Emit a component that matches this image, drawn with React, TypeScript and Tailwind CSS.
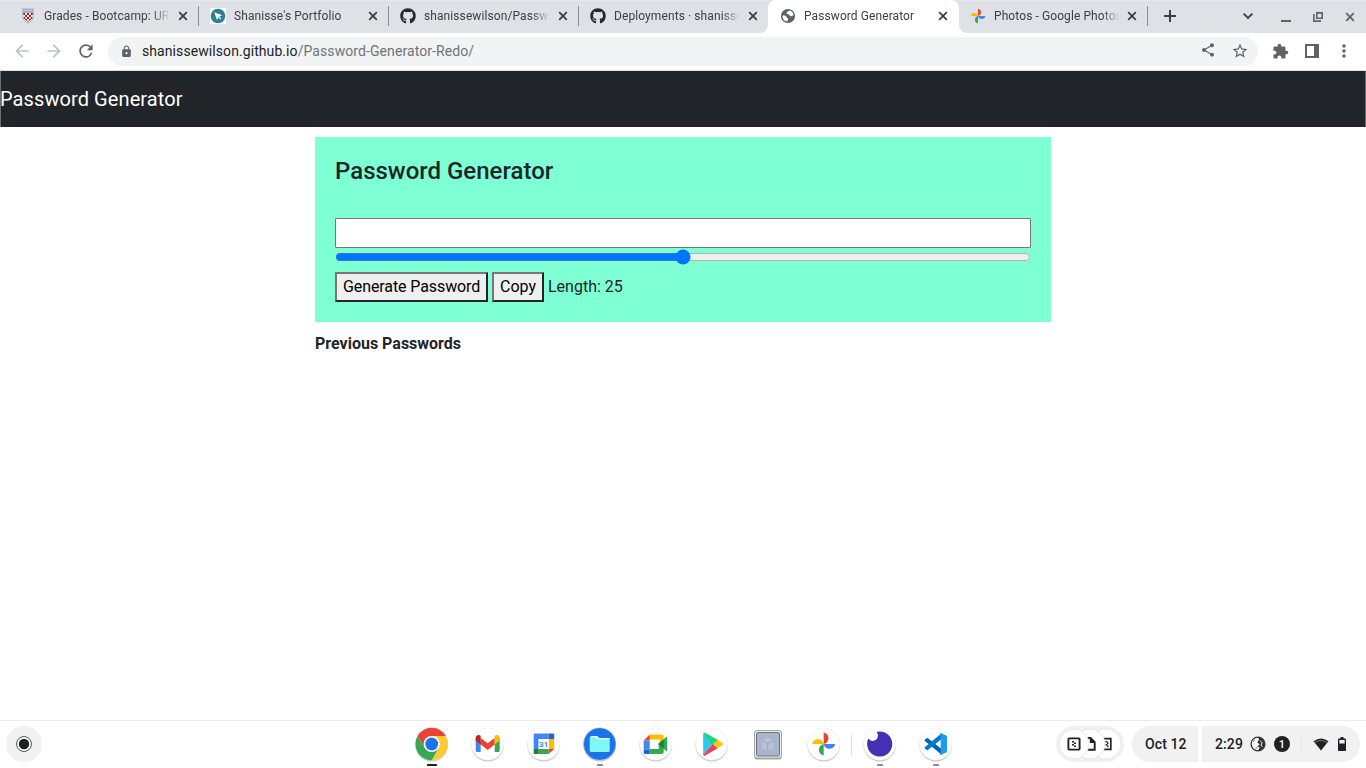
import type { ReactNode } from "react";
import { useState } from "react";
import { MdArrowBack, MdArrowForward, MdRefresh, MdLock, MdShare, MdStarBorder, MdExtension, MdMoreVert } from "react-icons/md";
import { FaGithub } from "react-icons/fa";

function CrossIcon({ className = "" }: { className?: string }) {
  return (
    <svg width="10" height="10" viewBox="0 0 10 10" className={"shrink-0 " + className}>
      <path d="M1.2 1.2 8.8 8.8M8.8 1.2 1.2 8.8" stroke="currentColor" strokeWidth="1.8" />
    </svg>
  );
}

function Pinwheel({ size }: { size: number }) {
  return (
    <svg width={size} height={size} viewBox="0 0 24 24">
      <path d="M12 1a5.6 5.6 0 0 1 0 11z" fill="#ea4335" />
      <path d="M23 12a5.6 5.6 0 0 1-11 0z" fill="#4285f4" />
      <path d="M12 23a5.6 5.6 0 0 1 0-11z" fill="#34a853" />
      <path d="M1 12a5.6 5.6 0 0 1 11 0z" fill="#fbbc04" />
    </svg>
  );
}

function ShieldFavicon() {
  return (
    <svg width="16" height="16" viewBox="0 0 16 16">
      <rect x="2" y="0.5" width="12" height="4" fill="#a9abd0" />
      <path d="M2 2.4h12" stroke="#d5d6ea" strokeWidth=".8" strokeDasharray="1.5 .7" />
      <path d="M2.6 4.5h10.8v4.6Q13 13 8 15.3 3 13 2.6 9.1z" fill="#fff" stroke="#aaa9c6" strokeWidth=".9" />
      <g fill="#b01824">
        <path d="M3.2 5h2v2h-2zM7 5h2v2H7zM10.8 5h2v2h-2zM5.1 7h2v2h-2zM8.9 7h2v2h-2zM3.3 9h1.9v2H4zM7 9h2v2H7zM10.8 9h1.9l-.7 2h-1.2zM5.1 11h2v2l-2-1zM8.9 11h2v1l-2 1zM7 13h2l-1 1.2z" />
      </g>
    </svg>
  );
}

function ArrowFavicon() {
  return (
    <svg width="16" height="16" viewBox="0 0 16 16">
      <rect width="16" height="16" fill="#fff" />
      <circle cx="8" cy="8" r="7.3" fill="#2a7f95" />
      <path d="M4.2 4.300 12.300 7.300 9.300 8.500 11.300 10.800 10.400 11.600 8.400 9.300 7 11.900z" fill="#fff" />
    </svg>
  );
}

function GlobeFavicon() {
  return (
    <svg width="16" height="16" viewBox="0 0 16 16">
      <circle cx="8" cy="8" r="7.1" fill="#5f6368" />
      <path d="M9.200 2.500C8.800 3.800 6.700 3.400 6.600 4.900 6.500 6.200 7.700 6 8.600 6.300 9.900 6.700 9.300 8.200 10.700 8.300 11.800 8.400 12.300 7.500 13.600 7.600 13.700 4.800 11.800 2.900 9.200 2.500zM2.400 7.600C4 7.500 6.300 7.600 6.500 9.100 6.700 10.200 8 9.800 8.100 10.900 8.200 12 7.200 12.100 7.400 13.500 4.600 13.500 2.300 11 2.400 7.600z" fill="#fff" />
    </svg>
  );
}

type TabData = { title: string; icon: ReactNode };

const tabs: TabData[] = [
  { title: "Grades - Bootcamp: UR-V", icon: <ShieldFavicon /> },
  { title: "Shanisse's Portfolio", icon: <ArrowFavicon /> },
  { title: "shanissewilson/Passwo", icon: <FaGithub size={16} color="#24292f" /> },
  { title: "Deployments · shanissew", icon: <FaGithub size={16} color="#24292f" /> },
  { title: "Password Generator", icon: <GlobeFavicon /> },
  { title: "Photos - Google Photos", icon: <Pinwheel size={16} /> },
];

function TabContent({ tab, narrow = false }: { tab: TabData; narrow?: boolean }) {
  return (
    <>
      <span className="flex size-4 shrink-0 items-center justify-center">{tab.icon}</span>
      <span className="ml-2 w-[124px] shrink-0 overflow-hidden whitespace-nowrap text-[12px] leading-4 tracking-[0.09px] text-[#3c4043] [mask-image:linear-gradient(to_right,#000_108px,transparent_126px)]">
        {tab.title}
      </span>
      <CrossIcon className={narrow ? "ml-[9px] text-[#3c4043]" : "ml-[10px] text-[#3c4043]"} />
    </>
  );
}

function TabStrip() {
  return (
    <header className="flex h-[33px] bg-white">
      <div className="flex w-[768px] rounded-br-lg border-t border-[#e6e9ec] bg-[#dee1e6] pl-[9px]">
        {tabs.slice(0, 4).map((tab, i) => (
          <div key={tab.title} className="flex h-[30px] w-[190px] shrink-0 items-center pl-[11px] last:w-[189px]">
            <TabContent tab={tab} />
            {i < 3 && <span className="ml-[10px] h-5 w-px shrink-0 bg-[#8b8e93]" />}
          </div>
        ))}
      </div>
      <div className="flex h-[33px] w-[191px] bg-[linear-gradient(#dee1e6_12px,#fff_12px)]">
        <div className="flex h-8 w-full items-center rounded-t-lg bg-white pl-3">
          <TabContent tab={tabs[4]} />
        </div>
      </div>
      <div className="flex flex-1 rounded-bl-lg border-t border-[#e6e9ec] bg-[#dee1e6] text-[#3c4043]">
        <div className="flex h-[30px] w-[189px] items-center pl-[11px]">
          <TabContent tab={tabs[5]} narrow />
          <span className="ml-[10px] h-5 w-px shrink-0 bg-[#8b8e93]" />
        </div>
        <svg width="12" height="12" viewBox="0 0 12 12" className="mt-[9px] ml-4">
          <path d="M6 0v12M0 6h12" stroke="#3c4043" strokeWidth="2" />
        </svg>
        <div className="mr-[11px] ml-auto flex gap-[22px] pt-[10px] text-[#5f6368]">
          <svg width="10" height="12" viewBox="0 0 10 12">
            <path d="M.6 2.700 5 7l4.400-4.300" stroke="#3c4043" strokeWidth="1.8" fill="none" />
          </svg>
          <svg width="10" height="12" viewBox="0 0 10 12" className="ml-[6px]">
            <path d="M0 10h10" stroke="#5f6368" strokeWidth="2" />
          </svg>
          <svg width="10" height="12" viewBox="0 0 10 12">
            <path d="M3.800 1.900h5.400v5.300H3.800zM.8 3v7.100H8" stroke="#5f6368" strokeWidth="1.6" fill="none" />
          </svg>
          <CrossIcon className="mt-px" />
        </div>
      </div>
    </header>
  );
}

function Toolbar() {
  return (
    <div className="flex h-[38px] items-center border-b border-[#dcdee0] bg-white pb-px pl-[6px] text-[#5f6368]">
      <span className="flex w-8 justify-center text-[#bdc1c6]"><MdArrowBack size={20} /></span>
      <span className="flex w-8 justify-center text-[#bdc1c6]"><MdArrowForward size={20} /></span>
      <span className="flex w-8 justify-center"><MdRefresh size={20} /></span>
      <div className="ml-[6px] flex h-[29px] w-[1150px] items-center rounded-full bg-[#f1f3f4] pl-[12px]">
        <MdLock size={13} />
        <span className="ml-[9px] text-[14px] leading-5 tracking-[0.08px] text-[#6f7377]">
          <span className="text-[#202124]">shanissewilson.github.io</span>/Password-Generator-Redo/
        </span>
        <span className="mr-[2px] ml-auto flex w-16 shrink-0">
          <span className="flex w-8 justify-center"><MdShare size={16} /></span>
          <span className="flex w-8 justify-center"><MdStarBorder size={18} /></span>
        </span>
      </div>
      <span className="ml-[6px] flex w-8 justify-center"><MdExtension size={17} /></span>
      <span className="flex w-8 justify-center">
        <svg width="14" height="14" viewBox="0 0 14 14">
          <path d="M0 0h14v14H0zM2 2v10h7V2z" fill="currentColor" fillRule="evenodd" />
        </svg>
      </span>
      <span className="flex w-8 justify-center"><MdMoreVert size={20} /></span>
    </div>
  );
}

function GeneratorPage() {
  const [length, setLength] = useState(25);
  const [password, setPassword] = useState("");
  const generate = () => {
    const chars = "abcdefghijklmnopqrstuvwxyzABCDEFGHIJKLMNOPQRSTUVWXYZ0123456789!@#$%";
    setPassword(Array.from({ length }, () => chars[Math.floor(Math.random() * chars.length)]).join(""));
  };
  const button = "h-[30px] whitespace-nowrap border-2 border-t-[#767676] border-l-[#767676] border-r-[#212529] border-b-[#212529] bg-[#efefef] pl-[6px] leading-6 text-black";
  return (
    <div className="flex-1 text-base text-[#212529]">
      <nav className="flex h-14 items-center bg-[#212529] text-xl tracking-[0.09px] text-white shadow-[inset_1px_0_#6c6f72,inset_-1px_0_#6c6f72]">
        Password Generator
      </nav>
      <main className="mx-auto w-[736px] pt-[10px]">
        <section className="h-[185px] bg-[#7fffd4] p-5">
          <h1 className="mb-8 text-2xl leading-[29px] font-medium">Password Generator</h1>
          <input readOnly value={password} className="block h-[30px] w-full rounded-[1px] border border-[#767676] bg-white px-0.5" />
          <input
            type="range"
            min={0}
            max={50}
            value={length}
            onChange={(e) => setLength(Number(e.target.value))}
            className="mt-px mb-[7px] block h-4 w-full accent-[#0075ff]"
          />
          <div className="flex items-center gap-1">
            <button className={button + " w-[153px] text-left tracking-[-0.1px]"} onClick={generate}>Generate Password</button>
            <button className={button + " w-[52px] text-left"}>Copy</button>
            <span className="leading-6">Length: {length}</span>
          </div>
        </section>
        <h2 className="mt-[10px] leading-6 font-bold">Previous Passwords</h2>
      </main>
    </div>
  );
}

function AppIcon({ children, plate = "#fff", running }: { children: ReactNode; plate?: string; running?: string }) {
  return (
    <div className="flex w-14 shrink-0 justify-center">
      <svg width="40" height="47" viewBox="0.3 0 40 47">
        {plate !== "none" && (
          <>
            <circle cx="20" cy="24.300" r="16.300" fill="#c7c7c7" />
            <circle cx="20" cy="23" r="16.300" fill={plate} stroke="#e4e4e4" strokeWidth=".5" />
          </>
        )}
        {children}
        {running && <rect x={running === "#202124" ? 15.3 : 17.3} y="43" width={running === "#202124" ? 10 : 6} height="2" rx=".6" fill={running} />}
      </svg>
    </div>
  );
}

function Apps() {
  return (
    <div className="ml-[362px] flex">
      <AppIcon running="#202124">
        <path d="M20 23 5.900 14.900A16.300 16.300 0 0 1 34.100 14.900z" fill="#ea4335" />
        <path d="M20 14.900h14.100A16.300 16.300 0 0 1 20 39.300l7-12.200z" fill="#fbc934" />
        <path d="M13 27 5.900 14.900A16.300 16.300 0 0 0 20 39.300l7-12.200z" fill="#34a853" />
        <path d="M5.900 14.900 13 27l7-12.100z" fill="#ea4335" />
        <circle cx="20" cy="23" r="8.100" fill="#fff" />
        <circle cx="20" cy="23" r="6.400" fill="#1a73e8" />
      </AppIcon>
      <AppIcon>
        <path d="M8 17v12.500q0 1.500 1.500 1.500H13V20z" fill="#4285f4" />
        <path d="M27 20v11h3.500q1.500 0 1.500-1.500V17z" fill="#34a853" />
        <path d="m13 17 7 5.200 7-5.200v6.500L20 29l-7-5.500z" fill="#ea4335" />
        <path d="M8 17.500q0-3.500 3-3.500 1 0 2 .8v8.700l-5-3.800z" fill="#c5221f" />
        <path d="M32 17.500q0-3.500-3-3.500-1 0-2 .8v8.700l5-3.800z" fill="#fbbc04" />
      </AppIcon>
      <AppIcon>
        <path d="M11 12.500h14V18H15v10h-5V13.500q0-1 1-1z" fill="#4285f4" />
        <path d="M25 12.500h4.500q1 0 1 1V18H25z" fill="#1967d2" />
        <path d="M25 18h5.500v10H25z" fill="#fbbc04" />
        <path d="M10 28h5v5h-4q-1 0-1-1z" fill="#188038" />
        <path d="M15 28h10v5H15z" fill="#34a853" />
        <path d="M25 28h5.500L25 33z" fill="#ea4335" />
        <path d="M15 18h10v10H15z" fill="#fff" />
        <text x="20" y="26" textAnchor="middle" fontSize="8" fontWeight="700" fill="#4285f4">31</text>
      </AppIcon>
      <AppIcon plate="#1a73e8" running="#8e8e8e">
        <path d="M10 17q0-2 2-2h5l2 2h9.500q1.500 0 1.500 1.500v11q0 1.500-1.500 1.500h-17Q10 31 10 29.500z" fill="#82f7fa" />
        <path d="M11 15h6.500l2 2H30v1.200H19z" fill="#e9ffff" />
      </AppIcon>
      <AppIcon>
        <path d="M14 13.500h12q2 0 2 2V23h-4v-4.500H14z" fill="#fbbc04" />
        <path d="m14 13.500-6 6h6z" fill="#ea4335" />
        <path d="M8 19.500h6v9H8z" fill="#4285f4" />
        <path d="M8 28.500h6V33H9.500Q8 33 8 31.500z" fill="#1967d2" />
        <path d="M14 28h9v-5h5v8q0 2-2 2H14z" fill="#34a853" />
        <path d="m22.500 23 8-7q1-.7 1 .6v13q0 1.200-1 .5z" fill="#34a853" />
        <path d="m22.500 23 5.500-4.800v9.600z" fill="#188038" />
      </AppIcon>
      <AppIcon>
        <path d="M11.500 12v22L21 23z" fill="#30c6ee" />
        <path d="M11.500 12q.5-1 2-.2L27 19.500 21 25z" fill="#19d97d" />
        <path d="m11.500 34 9.500-11 5 4.200-12.500 7.200q-1.500.8-2-.4z" fill="#f33d52" />
        <path d="m26 18.900 5 3q1.500 1.100 0 2.200l-5 3.100-5-4.200z" fill="#fcc817" />
      </AppIcon>
      <AppIcon plate="none">
        <rect x="6.800" y="10" width="27" height="28.500" rx="2.500" fill="#a6a6a6" />
        <rect x="6.800" y="9.500" width="27" height="27.500" rx="2.500" fill="#ececec" stroke="#a5a5a5" />
        <rect x="8.800" y="11.500" width="23" height="23.500" rx="1.500" fill="#a9b5ca" stroke="#667389" />
        <path d="m20 16.500 6 3v7.500l-6 3-6-3v-7.500z" fill="#b8c2d3" />
        <path d="m14 19.500 6 3 6-3M20 22.500V30" stroke="#98a6bd" fill="none" />
      </AppIcon>
      <AppIcon>
        <g transform="translate(7.500 10.500)">
          <Pinwheel size={25} />
        </g>
      </AppIcon>
      <span className="-ml-px h-5 w-px self-center bg-[#dadada]" />
      <AppIcon running="#8e8e8e">
        <path d="M20 10.400A12.600 12.600 0 1 1 8.600 17.600 5.300 5.300 0 0 0 18.200 14.200Q18.300 12 16.700 10.900 18.200 10.400 20 10.400z" fill="#4430b4" />
      </AppIcon>
      <AppIcon running="#8e8e8e">
        <path d="m9.200 18.600 1.700-1.400q.6-.4 1.200 0L26 28v5.800L9.200 20q-.8-.7 0-1.400z" fill="#0065a9" />
        <path d="m9.200 27.500 1.700 1.500q.6.400 1.200 0L26 18v-5.800L9.200 26.100q-.8.700 0 1.400z" fill="#007acc" />
        <path d="m25 12 5.500 2.500q.8.400.8 1.200v14.700q0 .8-.8 1.200L25 34q-1 .4-1.700-.3 1.700.6 1.700-1.200v-19q0-1.700-1.700-1.200Q24 11.600 25 12z" fill="#1f9cf0" />
      </AppIcon>
    </div>
  );
}

function RecentFiles() {
  return (
    <svg width="68" height="36" viewBox="0 0 68 36" className="ml-[92px] shrink-0">
      <rect width="68" height="36" rx="18" fill="#f1f1f1" />
      <circle cx="50" cy="18" r="15" fill="#fff" stroke="#e4e4e4" strokeWidth=".7" />
      <path d="M46 12.700h8.800v10.600H46" fill="none" stroke="#202124" strokeWidth="1.700" />
      <path d="M49.500 15h2v1.500h-2zM51 16.500h1.500V18H51zM49.500 18h2v1.500h-2zM51 19.500h1.500V21H51z" fill="#202124" />
      <circle cx="34" cy="18" r="15" fill="#fff" stroke="#dcdcdc" strokeWidth=".7" />
      <path d="M31 12h3.500l4.200 4.200v7.600H31" fill="none" stroke="#202124" strokeWidth="1.900" />
      <path d="M33.800 12v5h5z" fill="#202124" />
      <circle cx="18" cy="18" r="15" fill="#fff" stroke="#dcdcdc" strokeWidth=".7" />
      <rect x="12.400" y="12.400" width="11.200" height="11.200" rx=".8" fill="none" stroke="#202124" strokeWidth="1.900" />
      <path d="M16 15h2v1.500h-2zM18 16.500h2V18h-2zM16 18h2v1.500h-2zM18 19.500h2V21h-2z" fill="#202124" />
    </svg>
  );
}

function Shelf() {
  return (
    <footer className="flex h-12 border-t border-[#ececec] bg-white font-medium text-[#202124]">
      <svg width="36" height="36" viewBox="0 0 36 36" className="mt-[5px] ml-[6px] shrink-0">
        <circle cx="18" cy="18" r="18" fill="#f1f1f1" />
        <circle cx="18" cy="18" r="7.500" fill="#fff" stroke="#55585b" />
        <circle cx="18" cy="18" r="5.200" fill="#202124" />
      </svg>
      <Apps />
      <div className="mt-[5px] flex h-9 text-[14px]">
        <RecentFiles />
        <div className="ml-2 flex w-[66px] items-center rounded-l-full rounded-r-[4px] bg-[#f1f1f1] pl-[13px] tracking-[0.1px] whitespace-nowrap">Oct 12</div>
        <div className="ml-1 flex w-[158px] items-center rounded-l-[4px] rounded-r-full bg-[#f1f1f1] pl-[13px]">
          <span className="w-[28px] tracking-[0.1px]">2:29</span>
          <svg width="16" height="16" viewBox="0 0 16 16" className="ml-[7px]">
            <circle cx="8" cy="8" r="6.900" fill="#fff" stroke="#303336" strokeWidth="1.300" />
            <path d="M8 1.200a6.800 6.800 0 0 1 0 13.600l1.600-3-2-1.500 2-2-2.400-2L9 4z" fill="#303336" />
            <path d="m10 4.500 2 2-1 3 1.500 1" stroke="#fff" fill="none" />
            <path d="M3 5.500 5 4M5.500 13l2-2.500" stroke="#777" />
          </svg>
          <span className="ml-2 flex size-4 items-center justify-center rounded-full bg-[#202124] text-[11px] leading-none text-white">1</span>
          <span className="ml-[11px] h-5 w-px bg-[#e8e8e8]" />
          <svg width="16" height="13" viewBox="0 0 16 13" className="ml-[11px]">
            <path d="M.5 3.300Q8-2.200 15.500 3.300L8 12.500z" fill="#202124" />
            <path d="M1.500 4.700Q8 .3 14.500 4.700" fill="none" stroke="#aaa" strokeWidth=".6" />
          </svg>
          <svg width="8" height="14" viewBox="0 0 8 14" className="ml-[9px]">
            <path d="M2.500 0h3v1.500H7q1 0 1 1V13q0 1-1 1H1q-1 0-1-1V2.500q0-1 1-1h1.500zM1.300 3v3.500h5.400V3z" fill="#202124" fillRule="evenodd" />
          </svg>
        </div>
      </div>
    </footer>
  );
}

export default function App() {
  return (
    <div className="flex h-screen w-screen flex-col overflow-hidden bg-white font-[Roboto,sans-serif]">
      <TabStrip />
      <Toolbar />
      <GeneratorPage />
      <Shelf />
    </div>
  );
}
